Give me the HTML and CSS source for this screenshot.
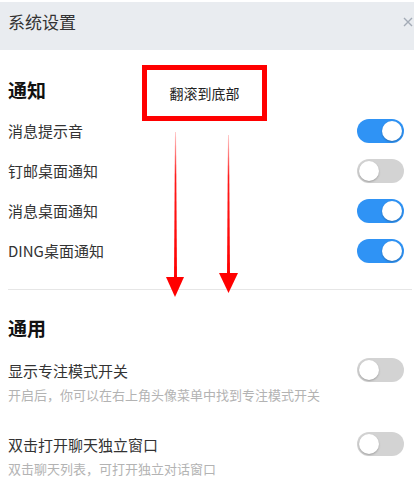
FILE: index.html
```html
<!DOCTYPE html>
<html lang="zh-CN">
<head>
<meta charset="utf-8">
<title>系统设置</title>
<link rel="stylesheet" href="styles.css">
</head>
<body>
<div class="page">
  <header class="header">
    <span class="header-title">系统设置</span>
    <svg class="close" width="10" height="10" viewBox="0 0 10 10"><path d="M1 1L9 9M9 1L1 9" stroke="#a3abb6" stroke-width="1.4" fill="none"/></svg>
  </header>

  <section class="section">
    <h2 class="section-title">通知</h2>
    <div class="row"><span class="label">消息提示音</span><span class="toggle on"></span></div>
    <div class="row"><span class="label">钉邮桌面通知</span><span class="toggle"></span></div>
    <div class="row"><span class="label">消息桌面通知</span><span class="toggle on"></span></div>
    <div class="row"><span class="label">DING桌面通知</span><span class="toggle on"></span></div>
  </section>

  <div class="divider"></div>

  <section class="section">
    <h2 class="section-title general">通用</h2>
    <div class="row tall">
      <div class="text">
        <div class="label">显示专注模式开关</div>
        <div class="desc">开启后，你可以在右上角头像菜单中找到专注模式开关</div>
      </div>
      <span class="toggle"></span>
    </div>
    <div class="row tall">
      <div class="text">
        <div class="label">双击打开聊天独立窗口</div>
        <div class="desc">双击聊天列表，可打开独立对话窗口</div>
      </div>
      <span class="toggle"></span>
    </div>
  </section>

  <div class="callout">翻滚到底部</div>
  <svg class="arrows" width="414" height="490" viewBox="0 0 414 490">
    <defs>
      <linearGradient id="fade" x1="0" y1="0" x2="0" y2="1">
        <stop offset="0" stop-color="#ff0000" stop-opacity="0.2"/>
        <stop offset="0.3" stop-color="#ff0000" stop-opacity="0.9"/>
        <stop offset="1" stop-color="#ff0000" stop-opacity="1"/>
      </linearGradient>
    </defs>
    <polygon points="175,132 176,132 177,280 174,280" fill="url(#fade)"/>
    <polygon points="166,277 184,277 175,297" fill="#ff0000"/>
    <polygon points="228,135 229,135 230,276 227,276" fill="url(#fade)"/>
    <polygon points="219,273 238,273 228.5,293" fill="#ff0000"/>
  </svg>
</div>
</body>
</html>
```

FILE: styles.css
```css
html, body {
  margin: 0;
  padding: 0;
  background: #ffffff;
}

body {
  font-family: "Noto Sans CJK SC", "Noto Sans", sans-serif;
  color: #333333;
}

.page {
  position: relative;
  width: 414px;
  height: 490px;
  overflow: hidden;
  padding-top: 2px;
  box-sizing: border-box;
}

.header {
  height: 48px;
  background: #e9ecf0;
  display: flex;
  align-items: flex-start;
  justify-content: space-between;
  padding: 8px 0 0 8px;
  box-sizing: border-box;
}

.header-title {
  font-size: 17px;
  line-height: 24px;
  color: #333333;
}

.close {
  margin-top: 7px;
  margin-right: 1px;
}

.section {
  padding: 0 10px 0 8px;
}

.section-title {
  margin: 0;
  padding-top: 26px;
  padding-bottom: 7px;
  font-size: 19px;
  line-height: 28px;
  font-weight: 700;
  color: #111111;
}

.section-title.general {
  padding-top: 24px;
  padding-bottom: 0;
}

.row {
  height: 40px;
  display: flex;
  align-items: center;
  justify-content: space-between;
}

.label {
  font-size: 15px;
  line-height: 22px;
  color: #333333;
}

.row.tall {
  height: auto;
  align-items: flex-start;
  padding: 18px 0 12px;
}

.row.tall .toggle {
  margin-top: -2px;
}

.desc {
  margin-top: 4px;
  font-size: 13px;
  line-height: 18px;
  color: #b3b3b3;
}

.toggle {
  position: relative;
  flex: none;
  width: 47px;
  height: 24px;
  border-radius: 12px;
  background: #d3d3d3;
}

.toggle::after {
  content: "";
  position: absolute;
  top: 2px;
  left: 2px;
  width: 20px;
  height: 20px;
  border-radius: 50%;
  background: #ffffff;
  box-shadow: 0 1px 2px rgba(0, 0, 0, 0.25);
}

.toggle.on {
  background: #2f93f5;
}

.toggle.on::after {
  left: 25px;
}

.divider {
  margin: 18px 2px 0 8px;
  height: 1px;
  background: #e6e6e6;
}

.callout {
  position: absolute;
  left: 142px;
  top: 65px;
  width: 125px;
  height: 56px;
  box-sizing: border-box;
  border: 5px solid #ff0000;
  background: #ffffff;
  display: flex;
  align-items: center;
  justify-content: center;
  font-size: 14px;
  color: #222222;
}

.arrows {
  position: absolute;
  left: 0;
  top: 0;
  pointer-events: none;
}
```
